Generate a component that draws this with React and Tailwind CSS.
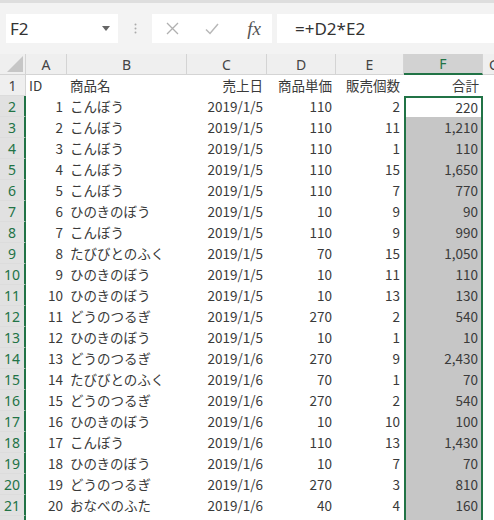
import React from "react";

const rows = [
  [1, "こんぼう", "2019/1/5", 110, 2, "220"],
  [2, "こんぼう", "2019/1/5", 110, 11, "1,210"],
  [3, "こんぼう", "2019/1/5", 110, 1, "110"],
  [4, "こんぼう", "2019/1/5", 110, 15, "1,650"],
  [5, "こんぼう", "2019/1/5", 110, 7, "770"],
  [6, "ひのきのぼう", "2019/1/5", 10, 9, "90"],
  [7, "こんぼう", "2019/1/5", 110, 9, "990"],
  [8, "たびびとのふく", "2019/1/5", 70, 15, "1,050"],
  [9, "ひのきのぼう", "2019/1/5", 10, 11, "110"],
  [10, "ひのきのぼう", "2019/1/5", 10, 13, "130"],
  [11, "どうのつるぎ", "2019/1/5", 270, 2, "540"],
  [12, "ひのきのぼう", "2019/1/5", 10, 1, "10"],
  [13, "どうのつるぎ", "2019/1/6", 270, 9, "2,430"],
  [14, "たびびとのふく", "2019/1/6", 70, 1, "70"],
  [15, "どうのつるぎ", "2019/1/6", 270, 2, "540"],
  [16, "ひのきのぼう", "2019/1/6", 10, 10, "100"],
  [17, "こんぼう", "2019/1/6", 110, 13, "1,430"],
  [18, "ひのきのぼう", "2019/1/6", 10, 7, "70"],
  [19, "どうのつるぎ", "2019/1/6", 270, 3, "810"],
  [20, "おなべのふた", "2019/1/6", 40, 4, "160"],
];

const font = { fontFamily: '"Noto Sans CJK JP", "Noto Sans", sans-serif' };

function RowHead({ n, selected }) {
  return (
    <div
      className={
        "w-[26px] shrink-0 flex items-center justify-center text-[14px] border-b border-[#dcdcdc] " +
        (selected
          ? "bg-[#e1e1e1] text-[#217346] border-r-2 border-r-[#217346]"
          : "bg-[#efefef] text-[#444] border-r border-r-[#d4d4d4]")
      }
      style={{ fontFamily: '"Noto Sans", sans-serif' }}
    >
      {n}
    </div>
  );
}

function ColHead({ label, w, selected }) {
  return (
    <div
      className={
        "shrink-0 flex items-center justify-center text-[14px] border-r border-[#d4d4d4] " +
        w +
        (selected
          ? " bg-[#d2d2d2] text-[#217346] border-b-2 border-b-[#217346]"
          : " bg-[#efefef] text-[#444] border-b border-b-[#d4d4d4]")
      }
    >
      {label}
    </div>
  );
}

export default function App() {
  return (
    <div className="w-[494px] h-[520px] overflow-hidden bg-white" style={font}>
      {/* formula bar */}
      <div className="h-[3px] bg-[#dedede]" />
      <div className="h-[51px] bg-[#f3f3f3] flex items-start pt-[11px]">
        <div className="ml-[6px] w-[112px] h-[29px] bg-white flex items-center justify-between pl-[4px] pr-[8px]">
          <span className="text-[17px] text-[#333]" style={{ fontFamily: '"Noto Sans", sans-serif' }}>F2</span>
          <svg width="8" height="5" viewBox="0 0 8 5">
            <path d="M0 0 L8 0 L4 5 Z" fill="#666" />
          </svg>
        </div>
        <div className="w-[34px] h-[29px] flex items-center justify-center">
          <svg width="3" height="11" viewBox="0 0 3 11">
            <circle cx="1.5" cy="1.5" r="1" fill="#aaa" />
            <circle cx="1.5" cy="5.5" r="1" fill="#aaa" />
            <circle cx="1.5" cy="9.5" r="1" fill="#aaa" />
          </svg>
        </div>
        <div className="w-[120px] h-[29px] bg-white flex items-center">
          <div className="w-[40px] flex justify-center">
            <svg width="13" height="13" viewBox="0 0 13 13">
              <path d="M1 1 L12 12 M12 1 L1 12" stroke="#b0b0b0" strokeWidth="1.3" />
            </svg>
          </div>
          <div className="w-[40px] flex justify-center">
            <svg width="14" height="12" viewBox="0 0 14 12">
              <path d="M1 6.5 L5 10.5 L13 1" stroke="#b8b8b8" strokeWidth="1.5" fill="none" />
            </svg>
          </div>
          <div className="w-[40px] flex justify-center pl-[4px]">
            <span className="italic text-[19px] text-[#555] leading-none" style={{ fontFamily: '"Liberation Serif", serif' }}>
              fx
            </span>
          </div>
        </div>
        <div className="ml-[5px] flex-1 h-[29px] bg-white flex items-center pl-[18px]">
          <span className="text-[17px] text-[#333]" style={{ fontFamily: '"Noto Sans", sans-serif' }}>=+D2*E2</span>
        </div>
      </div>

      {/* column headers */}
      <div className="flex h-[21px]" style={{ fontFamily: '"Noto Sans", sans-serif' }}>
        <div className="w-[26px] shrink-0 bg-[#efefef] border-r border-b border-[#d4d4d4] flex items-end justify-end pr-[2px] pb-[2px]">
          <svg width="16" height="16" viewBox="0 0 16 16">
            <path d="M16 0 L16 16 L0 16 Z" fill="#c6c6c6" />
          </svg>
        </div>
        <ColHead label="A" w="w-[41px]" />
        <ColHead label="B" w="w-[120px]" />
        <ColHead label="C" w="w-[80px]" />
        <ColHead label="D" w="w-[69px]" />
        <ColHead label="E" w="w-[68px]" />
        <ColHead label="F" w="w-[79px]" selected />
        <div className="flex-1 bg-[#efefef] border-b border-[#d4d4d4] text-[14px] text-[#444] pl-[6px] flex items-center">G</div>
      </div>

      {/* row 1 */}
      <div className="flex h-[21px] text-[13.5px] text-[#3a3a3a]">
        <RowHead n={1} />
        <div className="w-[41px] shrink-0 pl-[3px] flex items-center">ID</div>
        <div className="w-[120px] shrink-0 pl-[3px] flex items-center">商品名</div>
        <div className="w-[80px] shrink-0 pr-[4px] flex items-center justify-end">売上日</div>
        <div className="w-[69px] shrink-0 pr-[4px] flex items-center justify-end">商品単価</div>
        <div className="w-[68px] shrink-0 pr-[4px] flex items-center justify-end">販売個数</div>
        <div className="w-[79px] shrink-0 pr-[4px] flex items-center justify-end">合計</div>
        <div className="flex-1" />
      </div>

      {rows.map((r, i) => (
        <div key={r[0]} className="flex h-[21px] text-[13.5px] text-[#3a3a3a]">
          <RowHead n={i + 2} selected />
          <div className="w-[41px] shrink-0 pr-[4px] flex items-center justify-end">{r[0]}</div>
          <div className="w-[120px] shrink-0 pl-[3px] flex items-center">{r[1]}</div>
          <div className="w-[80px] shrink-0 pr-[4px] flex items-center justify-end">{r[2]}</div>
          <div className="w-[69px] shrink-0 pr-[4px] flex items-center justify-end">{r[3]}</div>
          <div className="w-[68px] shrink-0 pr-[4px] flex items-center justify-end">{r[4]}</div>
          <div
            className={
              "w-[79px] shrink-0 pr-[3px] flex items-center justify-end border-x-2 border-[#217346] " +
              (i === 0 ? "bg-white border-t-2" : "bg-[#c6c6c6]")
            }
          >
            {r[5]}
          </div>
          <div className="flex-1" />
        </div>
      ))}

      {/* row 22, cut off below the window */}
      <div className="flex h-[21px]">
        <RowHead n="" selected />
        <div className="w-[378px] shrink-0" />
        <div className="w-[79px] shrink-0 bg-[#c6c6c6] border-x-2 border-[#217346]" />
        <div className="flex-1" />
      </div>
    </div>
  );
}
